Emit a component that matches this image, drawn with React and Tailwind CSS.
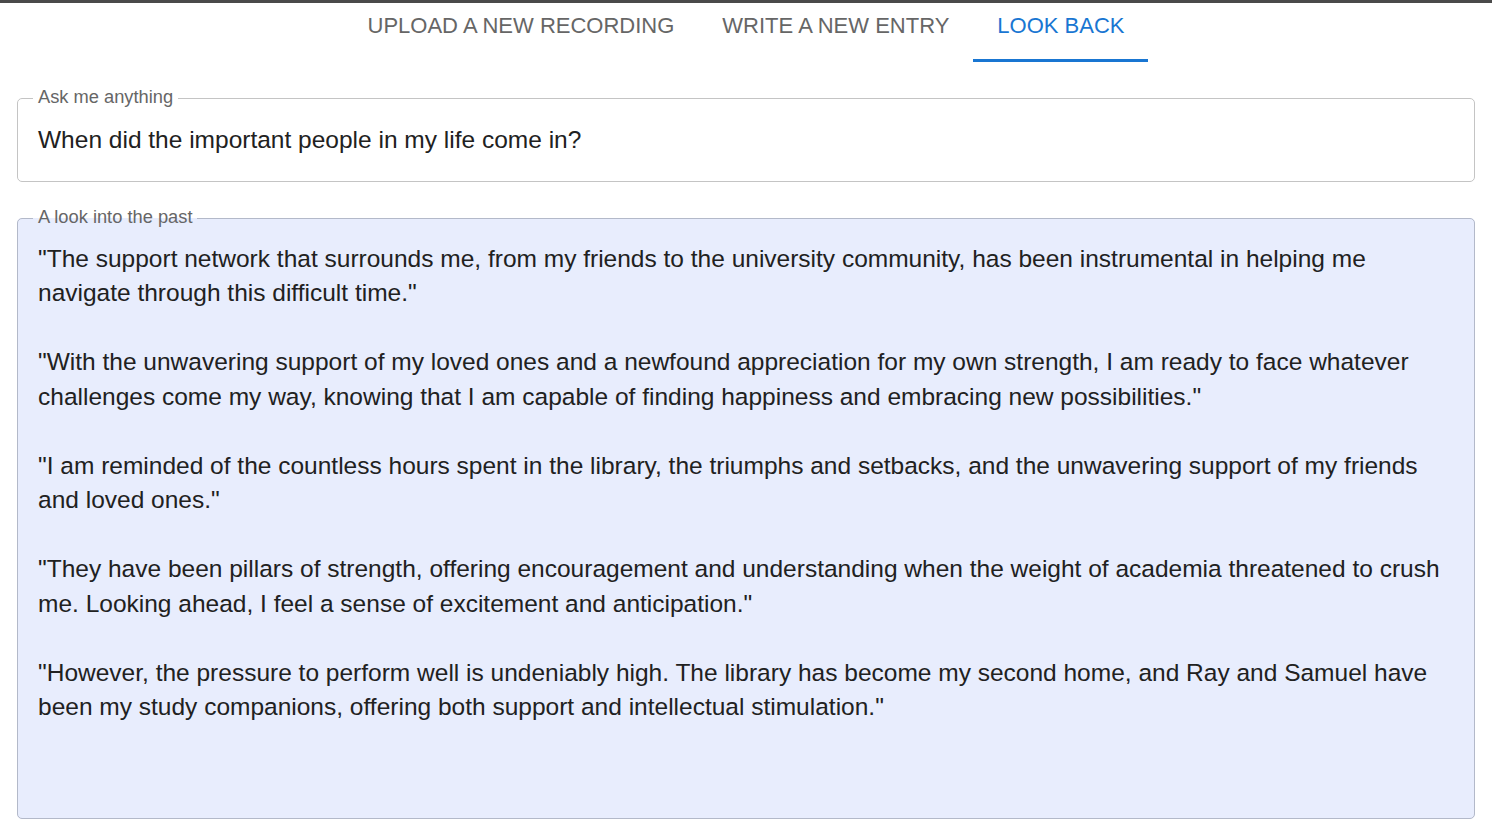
export default function App() {
  const paragraphs = [
    '"The support network that surrounds me, from my friends to the university community, has been instrumental in helping me navigate through this difficult time."',
    '"With the unwavering support of my loved ones and a newfound appreciation for my own strength, I am ready to face whatever challenges come my way, knowing that I am capable of finding happiness and embracing new possibilities."',
    '"I am reminded of the countless hours spent in the library, the triumphs and setbacks, and the unwavering support of my friends and loved ones."',
    '"They have been pillars of strength, offering encouragement and understanding when the weight of academia threatened to crush me. Looking ahead, I feel a sense of excitement and anticipation."',
    '"However, the pressure to perform well is undeniably high. The library has become my second home, and Ray and Samuel have been my study companions, offering both support and intellectual stimulation."',
  ];
  const tabs = [
    { label: "UPLOAD A NEW RECORDING", active: false },
    { label: "WRITE A NEW ENTRY", active: false },
    { label: "LOOK BACK", active: true },
  ];
  return (
    <div className="min-h-screen bg-white" style={{ fontFamily: '"Liberation Sans", Arial, sans-serif' }}>
      <div className="h-[3px] bg-[#4a4a4a]" />
      <div className="flex justify-center">
        {tabs.map((t) => (
          <div
            key={t.label}
            className={
              t.active
                ? "h-[59px] px-6 pt-[9px] text-[22px] leading-[28px] text-[#1976d2] border-b-[3px] border-[#1976d2] whitespace-nowrap"
                : "h-[59px] px-6 pt-[9px] text-[22px] leading-[28px] text-[#666666] border-b-[3px] border-transparent whitespace-nowrap"
            }
          >
            {t.label}
          </div>
        ))}
      </div>
      <div className="mx-[17px]">
        <fieldset className="mt-[25px] border border-[#c4c4c4] rounded-[5px] px-5 pt-[14px] pb-[23px] min-w-0">
          <legend className="-ml-[5px] px-[5px] text-[18.3px] leading-[22px] text-[#666666]">
            <span className="relative -top-[1px]">Ask me anything</span>
          </legend>
          <div className="text-[24.5px] leading-[34.5px] text-[#212121]">When did the important people in my life come in?</div>
        </fieldset>
        <fieldset className="mt-[26px] border border-[#b3b9c9] rounded-[5px] bg-[#e8edfd] px-5 pt-[12px] min-w-0">
          <legend className="-ml-[5px] px-[5px] text-[18.3px] leading-[22px] text-[#666666]">
            <span className="relative -top-[2px]">A look into the past</span>
          </legend>
          <div className="h-[576px] text-[24.5px] leading-[34.5px] text-[#212121] pr-2">
            {paragraphs.map((p, i) => (
              <div key={i}>
                {i > 0 && <div className="h-[34.5px]" />}
                <div>{p}</div>
              </div>
            ))}
          </div>
        </fieldset>
      </div>
    </div>
  );
}
